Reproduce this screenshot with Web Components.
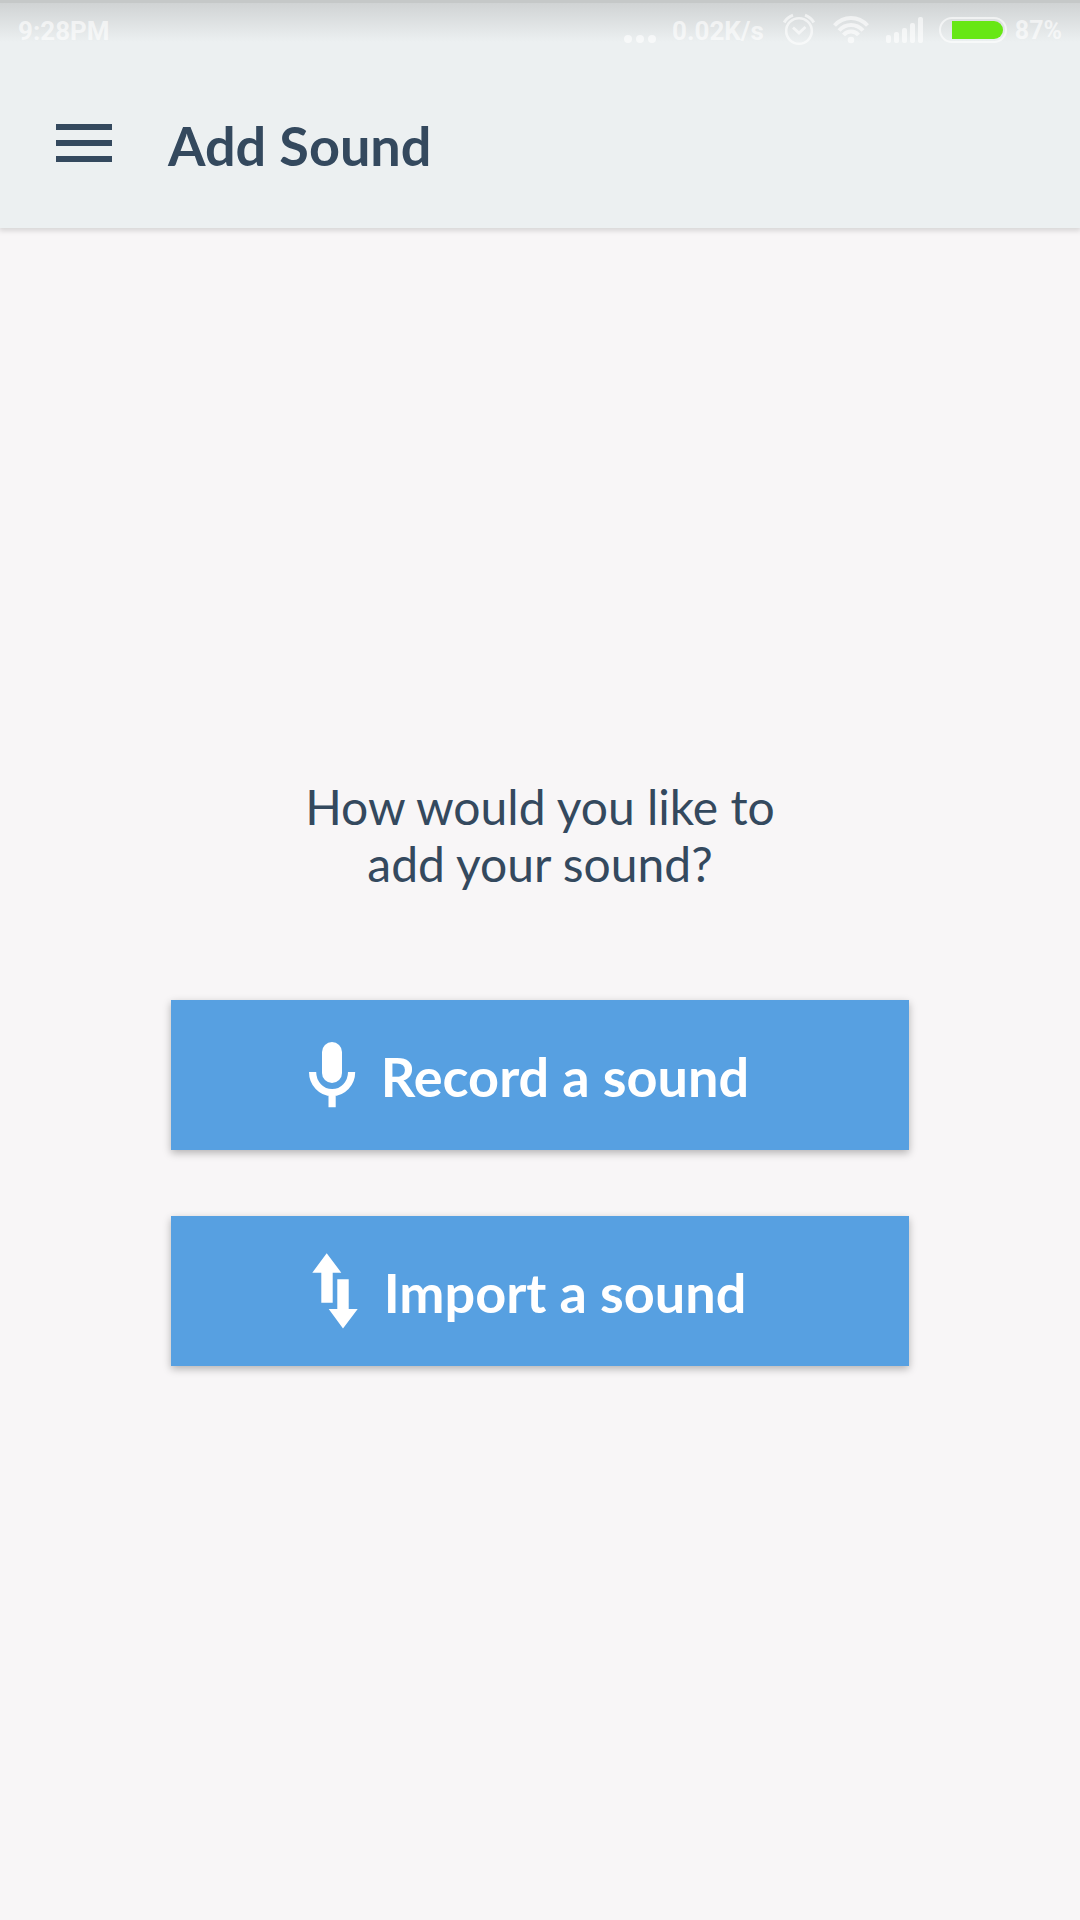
<!DOCTYPE html>
<html lang="en">
<head>
<meta charset="utf-8">
<meta name="viewport" content="width=device-width, initial-scale=1">
<title>Add Sound</title>
<style>
  body { margin: 0; background: #f8f6f7; color: #34495e; font-family: Lato, sans-serif; }
</style>
</head>
<body>
<app-screen>
  <status-bar slot="status" time="9:28PM" rate="0.02K/s" battery="87"></status-bar>
  <app-toolbar slot="toolbar">Add Sound</app-toolbar>
  <prompt-text>How would you like to add your sound?</prompt-text>
  <action-list>
    <action-button>
      <svg slot="icon" width="48" height="76" viewBox="0 0 48 76" aria-hidden="true">
        <rect x="13" y="5" width="20" height="41" rx="10" fill="#fff"/>
        <path d="M3.600 35A19.5 20.7 0 0 0 42.600 35M23.100 56V70.3" fill="none" stroke="#fff" stroke-width="7.2"/>
      </svg>
      Record a sound
    </action-button>
    <action-button>
      <svg slot="icon" width="48" height="76" viewBox="0 0 48 76" aria-hidden="true">
        <path fill="#fff" d="M14.7.3 29.3 19.7H20.7V49.7H9.3V19.7H.3ZM25.3 26.3H36.7V56H45.7L31 75.4 16.7 56H25.3Z"/>
      </svg>
      Import a sound
    </action-button>
  </action-list>
</app-screen>

<script>
  const define = (name, html, setup) => {
    const template = document.createElement('template');
    template.innerHTML = html;
    customElements.define(name, class extends HTMLElement {
      constructor() {
        super();
        this.attachShadow({ mode: 'open' }).append(template.content.cloneNode(true));
      }
      connectedCallback() {
        if (setup) setup(this, this.shadowRoot);
      }
    });
  };

  define('app-screen', `
    <style>
      :host { display: flex; flex-direction: column; min-height: 100vh; }
      header {
        background: linear-gradient(#c5c8c8 3px, #d0d3d4 3px, #ecf0f1 42px) #ecf0f1;
        box-shadow: 0 2px 5px 1px rgba(0, 0, 0, .13);
      }
      main {
        flex: 1; display: flex; flex-direction: column; justify-content: center;
        align-items: center; gap: 108px; box-sizing: border-box; padding: 0 171px 4px;
      }
    </style>
    <header><slot name="status"></slot><slot name="toolbar"></slot></header>
    <main><slot></slot></main>
  `);

  define('status-bar', `
    <style>
      :host {
        display: flex; align-items: center; justify-content: space-between;
        height: 60px; padding: 0 18px; box-sizing: border-box;
        font: 700 26px/60px Roboto, sans-serif; color: rgba(255, 255, 255, .6);
      }
      .tray { display: flex; align-items: center; gap: 16px; }
      .power { display: flex; align-items: center; gap: 8px; }
      .level { font-size: 25px; }
      span { padding-top: 2px; }
      svg { display: block; fill: currentColor; }
      .line { fill: none; stroke: currentColor; }
    </style>
    <span class="time"></span>
    <div class="tray">
      <svg width="32" height="60" viewBox="0 0 32 60"><circle cx="4" cy="39" r="4"/><circle cx="16" cy="39" r="4"/><circle cx="28" cy="39" r="4"/></svg>
      <span class="rate"></span>
      <svg width="37" height="60" viewBox="-3 0 37 60"><g class="line" stroke-width="2.6"><circle cx="16" cy="31" r="12.8"/><path d="M10 27.5 16 33 22.5 27" stroke-width="2.8"/><path d="M1.2 22.5Q4 17.5 10 15.2M30.8 22.5Q28 17.5 22 15.2" stroke-width="3"/></g></svg>
      <svg width="36" height="60" viewBox="0 0 36 60"><circle cx="18" cy="40" r="3.3"/><g class="line" stroke-width="4"><path d="M1.5 25.5Q8.500 18 18 18T34.500 25.500"/><path d="M6 30.500Q11 25 18 25T30 30.500"/><path d="M10.500 35Q13.500 31.500 18 31.500T25.500 35"/></g></svg>
      <svg width="38" height="60" viewBox="0 0 38 60"><rect x="1" y="35" width="5" height="8" rx="2"/><rect x="9" y="32" width="5" height="11" rx="2"/><rect x="17" y="28" width="5" height="15" rx="2"/><rect x="25" y="23" width="5" height="20" rx="2"/><rect x="33" y="17" width="5" height="26" rx="2"/></svg>
      <div class="power">
        <svg width="68" height="60" viewBox="0 0 68 60"><rect class="line" x="1" y="18" width="66" height="24" rx="12" stroke-width="2"/><path fill="#67e714" d="M13 21H55A9 9 0 0 1 55 39H13Z"/></svg>
        <span class="level"></span>
      </div>
    </div>
  `, (host, root) => {
    root.querySelector('.time').textContent = host.getAttribute('time');
    root.querySelector('.rate').textContent = host.getAttribute('rate');
    root.querySelector('.level').textContent = host.getAttribute('battery') + '%';
  });

  define('app-toolbar', `
    <style>
      :host { display: flex; align-items: center; gap: 56px; height: 168px; padding: 0 56px; box-sizing: border-box; }
      button { all: unset; display: block; cursor: pointer; }
      button:focus-visible { outline: 3px solid #57a0e1; }
      svg { display: block; }
      h1 { margin: 0; padding-top: 4px; font-size: 54px; line-height: 66px; font-weight: 700; }
    </style>
    <button type="button" aria-label="Open menu">
      <svg width="56" height="40" viewBox="0 0 56 40" fill="#34495e"><path d="M0 0H56V6H0ZM0 16H56V22H0ZM0 32H56V38H0Z"/></svg>
    </button>
    <h1><slot></slot></h1>
  `);

  define('prompt-text', `
    <style>
      :host { display: block; max-width: 540px; }
      p { margin: 0; font-size: 48px; line-height: 57px; text-align: center; }
    </style>
    <p><slot></slot></p>
  `);

  define('action-list', `
    <style>
      :host { display: flex; flex-direction: column; align-self: stretch; gap: 66px; }
    </style>
    <slot></slot>
  `);

  define('action-button', `
    <style>
      :host { display: block; }
      button {
        display: flex; align-items: center; justify-content: center; gap: 24px;
        width: 100%; height: 150px; box-sizing: border-box; margin: 0; padding: 0 22px 0 0;
        border: 0; background: #57a0e1; color: #fff; cursor: pointer;
        font: 700 54px/66px Lato, sans-serif;
        box-shadow: 0 3px 8px rgba(0, 0, 0, .28);
      }
      span { padding-top: 4px; }
      ::slotted(svg) { display: block; }
    </style>
    <button type="button"><slot name="icon"></slot><span><slot></slot></span></button>
  `);
</script>
</body>
</html>
